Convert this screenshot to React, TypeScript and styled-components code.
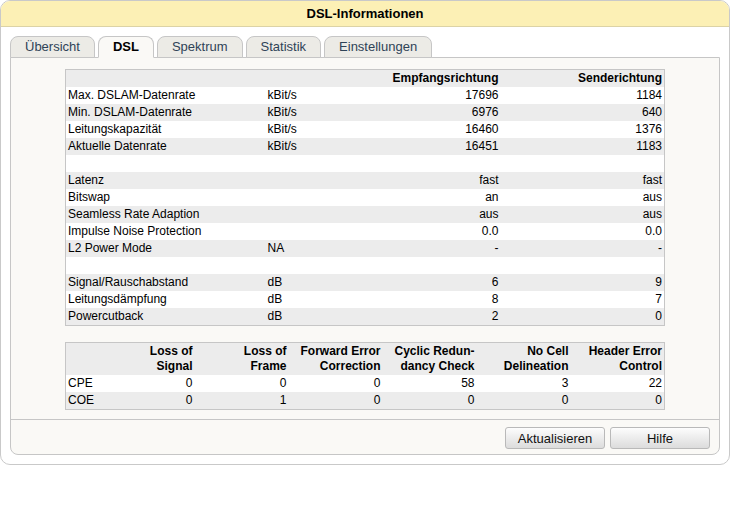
import React from 'react'
import styled, { createGlobalStyle } from 'styled-components'

const GlobalStyle = createGlobalStyle`
  body {
    margin: 0;
    background: #fff;
    font-family: 'Liberation Sans', Arial, sans-serif;
    color: #000;
  }
`

const Box = styled.div`
  width: 730px;
  box-sizing: border-box;
  border: 1px solid #c9c9c9;
  border-radius: 10px;
  overflow: hidden;
  background: #fff;
  padding-bottom: 9px;
`

const Title = styled.div`
  height: 25px;
  line-height: 25px;
  background: #fcf0b5;
  border-bottom: 1px solid #dcd3a6;
  text-align: center;
  font-weight: bold;
  font-size: 13px;
`

const TabRow = styled.div`
  display: flex;
  gap: 3px;
  padding: 9px 0 0 9px;
  position: relative;
  z-index: 1;
`

const Tab = styled.div<{ $active?: boolean }>`
  height: 20px;
  line-height: 20px;
  padding: 0 14px;
  font-size: 13px;
  border: 1px solid #c6c6c6;
  border-bottom: 1px solid ${p => (p.$active ? '#faf9f6' : '#c6c6c6')};
  border-radius: 8px 8px 0 0;
  background: ${p => (p.$active ? '#faf9f6' : '#ecebe6')};
  color: ${p => (p.$active ? '#000' : '#2f4357')};
  font-weight: ${p => (p.$active ? 'bold' : 'normal')};
  margin-bottom: -1px;
`

const Panel = styled.div`
  margin: 0 9px;
  border: 1px solid #c6c6c6;
  border-radius: 0 0 8px 8px;
  background: #faf9f6;
`

const Content = styled.div`
  padding: 11px 0 9px;
  display: flex;
  flex-direction: column;
  align-items: center;
  gap: 16px;
  border-bottom: 1px solid #c6c6c6;
`

const Table = styled.table`
  width: 599px;
  border-collapse: collapse;
  border: 1px solid #c6c6c6;
  font-size: 12px;
  table-layout: fixed;
`

const Row = styled.tr<{ $shade?: boolean }>`
  background: ${p => (p.$shade ? '#ececec' : '#fff')};
`

const Cell = styled.td<{ $right?: boolean; $head?: boolean }>`
  height: 17px;
  padding: 0 2px;
  line-height: 15px;
  white-space: nowrap;
  text-align: ${p => (p.$right ? 'right' : 'left')};
  font-weight: ${p => (p.$head ? 'bold' : 'normal')};
  vertical-align: middle;
`

const HeadCell = styled.td`
  height: 32px;
  padding: 0 2px;
  line-height: 15px;
  text-align: right;
  font-weight: bold;
  vertical-align: middle;
`

const Footer = styled.div`
  display: flex;
  justify-content: flex-end;
  gap: 5px;
  padding: 7px 9px 5px;
`

const Button = styled.button`
  width: 100px;
  height: 22px;
  padding: 0;
  font-family: 'Liberation Sans', Arial, sans-serif;
  font-size: 13px;
  color: #111;
  border: 1px solid #b9b9b9;
  border-radius: 3px;
  background: linear-gradient(#fdfdfd, #ececec 50%, #dcdcdc);
`

type InfoRow = [string, string, string, string] | null

const info: InfoRow[] = [
  ['Max. DSLAM-Datenrate', 'kBit/s', '17696', '1184'],
  ['Min. DSLAM-Datenrate', 'kBit/s', '6976', '640'],
  ['Leitungskapazität', 'kBit/s', '16460', '1376'],
  ['Aktuelle Datenrate', 'kBit/s', '16451', '1183'],
  null,
  ['Latenz', '', 'fast', 'fast'],
  ['Bitswap', '', 'an', 'aus'],
  ['Seamless Rate Adaption', '', 'aus', 'aus'],
  ['Impulse Noise Protection', '', '0.0', '0.0'],
  ['L2 Power Mode', 'NA', '-', '-'],
  null,
  ['Signal/Rauschabstand', 'dB', '6', '9'],
  ['Leitungsdämpfung', 'dB', '8', '7'],
  ['Powercutback', 'dB', '2', '0'],
]

const errorHeads: [string, string][] = [
  ['Loss of', 'Signal'],
  ['Loss of', 'Frame'],
  ['Forward Error', 'Correction'],
  ['Cyclic Redun-', 'dancy Check'],
  ['No Cell', 'Delineation'],
  ['Header Error', 'Control'],
]

const errors: [string, number[]][] = [
  ['CPE', [0, 0, 0, 58, 3, 22]],
  ['COE', [0, 1, 0, 0, 0, 0]],
]

const tabs = ['Übersicht', 'DSL', 'Spektrum', 'Statistik', 'Einstellungen']

export default function App() {
  return (
    <>
      <GlobalStyle />
      <Box>
        <Title>DSL-Informationen</Title>
        <TabRow>
          {tabs.map(t => (
            <Tab key={t} $active={t === 'DSL'}>
              {t}
            </Tab>
          ))}
        </TabRow>
        <Panel>
          <Content>
            <Table>
              <colgroup>
                <col style={{ width: 200 }} />
                <col style={{ width: 100 }} />
                <col style={{ width: 135 }} />
                <col style={{ width: 164 }} />
              </colgroup>
              <tbody>
                <Row $shade>
                  <Cell />
                  <Cell />
                  <Cell $right $head>Empfangsrichtung</Cell>
                  <Cell $right $head>Senderichtung</Cell>
                </Row>
                {info.map((r, i) => (
                  <Row key={i} $shade={i % 2 === 1}>
                    <Cell>{r ? r[0] : ''}</Cell>
                    <Cell>{r ? r[1] : ''}</Cell>
                    <Cell $right>{r ? r[2] : ''}</Cell>
                    <Cell $right>{r ? r[3] : ''}</Cell>
                  </Row>
                ))}
              </tbody>
            </Table>
            <Table>
              <colgroup>
                <col style={{ width: 35 }} />
                {errorHeads.map((_, i) => (
                  <col key={i} style={{ width: 94 }} />
                ))}
              </colgroup>
              <tbody>
                <Row $shade>
                  <HeadCell />
                  {errorHeads.map(([a, b]) => (
                    <HeadCell key={a + b}>
                      {a}
                      <br />
                      {b}
                    </HeadCell>
                  ))}
                </Row>
                {errors.map(([name, vals], i) => (
                  <Row key={name} $shade={i % 2 === 1}>
                    <Cell>{name}</Cell>
                    {vals.map((v, j) => (
                      <Cell key={j} $right>{v}</Cell>
                    ))}
                  </Row>
                ))}
              </tbody>
            </Table>
          </Content>
          <Footer>
            <Button>Aktualisieren</Button>
            <Button>Hilfe</Button>
          </Footer>
        </Panel>
      </Box>
    </>
  )
}
